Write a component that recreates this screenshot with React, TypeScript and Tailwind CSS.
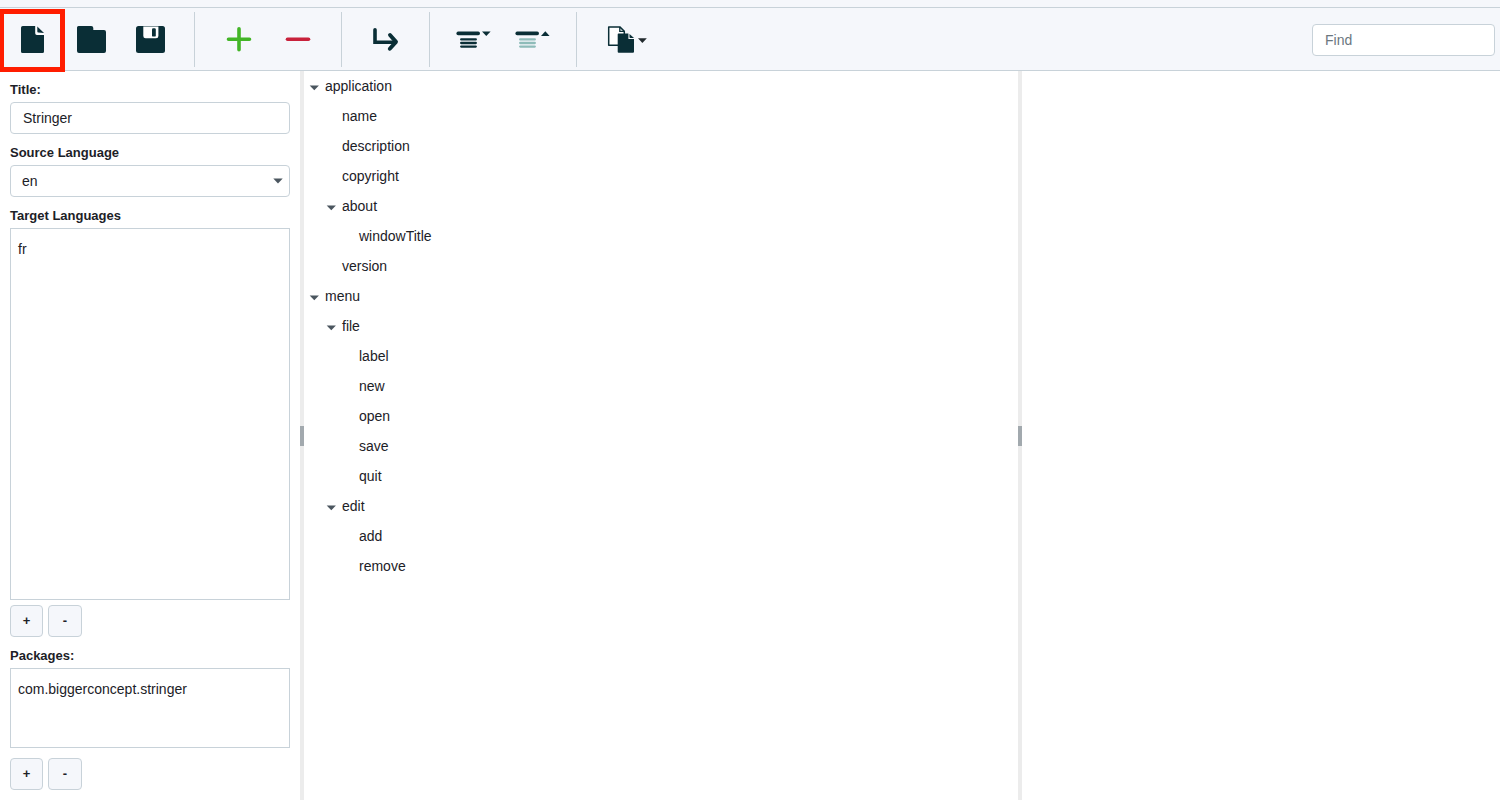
import { useState } from "react";
import type { ReactNode } from "react";

const INK = "#0a2e36";

function ToolButton({ label, highlighted, children }: { label: string; highlighted?: boolean; children: ReactNode }) {
  return (
    <button type="button" aria-label={label} className="relative flex w-[59px] shrink-0">
      <svg width="59" height="55" viewBox="0 0 59 55" fill={INK} aria-hidden="true">
        {children}
      </svg>
      {highlighted && <span className="absolute -top-[3px] -left-1 h-[63px] w-[66px] border-5 border-[#ff1d00]" />}
    </button>
  );
}

function Separator() {
  return <div className="mx-3.5 w-px shrink-0 bg-[#c8d2d9]" />;
}

function Toolbar() {
  return (
    <header className="relative z-10 border-b border-[#c8d2d9] bg-[#f5f7fb]">
      <div className="h-2 border-b border-[#c8d2d9]" />
      <div className="flex pt-1 pr-[5px] pb-[3px] pl-[3px]">
        <ToolButton label="New" highlighted>
          <path d="M32.8 14V20.6Q32.8 22.2 34.4 22.2H41" fill="none" stroke="#fff" strokeWidth="1.6" />
          <path d="M19.8 14H32.2V21.3Q32.2 22.9 33.8 22.9H41V39.5Q41 41 39.5 41H19.5Q18 41 18 39.5V15.8Q18 14 19.8 14Z" />
          <path d="M34.3 14.6L41 20.9L35.4 20.6Q34.3 20.5 34.3 19.5Z" />
        </ToolButton>
        <ToolButton label="Open">
          <path d="M16.5 14H29.2Q31.3 14 31.3 16V18H42Q44 18 44 20V39Q44 41 42 41H17Q15 41 15 39V15.5Q15 14 16.5 14Z" />
        </ToolButton>
        <ToolButton label="Save">
          <rect x="15" y="14" width="29" height="27" rx="2.5" />
          <path d="M22.3 14.4H37.4V24Q37.4 26.3 35.1 26.3H24.6Q22.3 26.3 22.3 24Z" fill="#fff" />
          <rect x="31" y="16.2" width="3.8" height="8.4" rx="1.2" />
        </ToolButton>
        <Separator />
        <ToolButton label="Add">
          <path d="M30 16.7V37.7M19.5 27.3H40.5" stroke="#43b527" strokeWidth="3.6" strokeLinecap="round" />
        </ToolButton>
        <ToolButton label="Remove">
          <path d="M19.5 27.3H40.5" stroke="#c8213b" strokeWidth="3.6" strokeLinecap="round" />
        </ToolButton>
        <Separator />
        <ToolButton label="Move">
          <path d="M19 17.8V30.2H39" fill="none" stroke={INK} strokeWidth="3.6" strokeLinecap="round" />
          <path d="M34 23L40 29.9L33.8 36.8" fill="none" stroke={INK} strokeWidth="3.9" strokeLinecap="round" strokeLinejoin="round" />
        </ToolButton>
        <Separator />
        <ToolButton label="Expand all">
          <path d="M14.2 21.4H34.2" stroke={INK} strokeWidth="3.6" strokeLinecap="round" />
          <path d="M17.2 27.4H31.8M17.2 31H31.8M17.2 34.6H31.8" stroke={INK} strokeWidth="2.3" strokeLinecap="round" />
          <path d="M38 19.5H46.6L42.3 24Z" />
        </ToolButton>
        <ToolButton label="Collapse all">
          <path d="M14.2 21.4H34.2" stroke={INK} strokeWidth="3.6" strokeLinecap="round" />
          <path d="M17.2 27.4H31.8M17.2 31H31.8M17.2 34.6H31.8" stroke="#8ebcb9" strokeWidth="2.3" strokeLinecap="round" />
          <path d="M38 24H46.6L42.3 19.2Z" />
        </ToolButton>
        <Separator />
        <ToolButton label="Copy">
          <path d="M17.7 14.9H28.8L33.3 19.3V33.2H17.7Z" fill="#fff" stroke={INK} strokeWidth="1.5" strokeLinejoin="round" />
          <path d="M28.8 14.9V19.4H33.3" fill="none" stroke={INK} strokeWidth="1.3" />
          <path d="M27.5 21.6H37.4V27H43V39.7Q43 40.8 42 40.8H27.7Q26.7 40.8 26.7 39.8V22.4Q26.7 21.6 27.5 21.6Z" />
          <path d="M38.5 22L43 26.1H39.3Q38.5 26.1 38.5 25.3Z" />
          <path d="M47 26.3H55.8L51.4 31Z" fill="#222a2e" />
        </ToolButton>
        <input
          type="search"
          aria-label="Find"
          placeholder="Find"
          className="ml-auto h-8 w-[183px] self-center rounded-[4px] border border-[#c8d2d9] bg-white px-3 text-sm placeholder:text-[#6b7780]"
        />
      </div>
    </header>
  );
}

function FieldLabel({ htmlFor, id, children }: { htmlFor?: string; id?: string; children: ReactNode }) {
  return (
    <label htmlFor={htmlFor} id={id} className="block shrink-0 pt-[9px] pb-0.5 text-[13px] leading-5 font-bold">
      {children}
    </label>
  );
}

function ListButtons({ subject }: { subject: string }) {
  const style = "h-8 rounded-[4px] border border-[#c8d2d9] bg-[#f5f7fb] text-[13px] font-bold";
  return (
    <div className="flex shrink-0 gap-[5px]">
      <button type="button" aria-label={`Add ${subject}`} className={`${style} w-[33px]`}>+</button>
      <button type="button" aria-label={`Remove ${subject}`} className={`${style} w-[34px]`}>-</button>
    </div>
  );
}

function Sidebar() {
  return (
    <aside className="flex w-[300px] shrink-0 flex-col px-2.5 pb-2.5">
      <FieldLabel htmlFor="title">Title:</FieldLabel>
      <input id="title" defaultValue="Stringer" className="h-8 shrink-0 rounded-[4px] border border-[#c8d2d9] bg-white px-3" />
      <FieldLabel htmlFor="source">Source Language</FieldLabel>
      <div className="relative flex shrink-0">
        <select id="source" defaultValue="en" className="h-8 w-full appearance-none rounded-[4px] border border-[#c8d2d9] bg-white px-[11px]">
          <option>en</option>
          <option>fr</option>
        </select>
        <svg className="pointer-events-none absolute top-[13px] right-[7px]" width="10" height="6" viewBox="0 0 10 6" fill="#4b565f" aria-hidden="true">
          <path d="M0.3 0.4H9.7L5 5.6Z" />
        </svg>
      </div>
      <FieldLabel id="targets">Target Languages</FieldLabel>
      <ul role="listbox" aria-labelledby="targets" className="mb-[5px] flex-1 border border-[#c8d2d9] px-[7px] py-[5px] leading-[30px]">
        <li role="option" aria-selected="false">fr</li>
      </ul>
      <ListButtons subject="language" />
      <FieldLabel id="packages">Packages:</FieldLabel>
      <ul role="listbox" aria-labelledby="packages" className="mb-2.5 h-20 shrink-0 border border-[#c8d2d9] px-[7px] py-[5px] leading-[30px]">
        <li role="option" aria-selected="false">com.biggerconcept.stringer</li>
      </ul>
      <ListButtons subject="package" />
    </aside>
  );
}

type Node = { name: string; children?: Node[] };

const tree: Node[] = [
  {
    name: "application",
    children: [
      { name: "name" },
      { name: "description" },
      { name: "copyright" },
      { name: "about", children: [{ name: "windowTitle" }] },
      { name: "version" },
    ],
  },
  {
    name: "menu",
    children: [
      { name: "file", children: [{ name: "label" }, { name: "new" }, { name: "open" }, { name: "save" }, { name: "quit" }] },
      { name: "edit", children: [{ name: "add" }, { name: "remove" }] },
    ],
  },
];

function TreeItem({ node }: { node: Node }) {
  const [open, setOpen] = useState(true);
  return (
    <li role="treeitem" aria-expanded={node.children ? open : undefined}>
      <div className="flex h-[30px] items-center">
        {node.children ? (
          <button type="button" aria-label={`Toggle ${node.name}`} onClick={() => setOpen(!open)} className="flex w-[17px] justify-start pt-1 pl-px">
            <svg className={open ? "" : "-rotate-90"} width="10" height="6" viewBox="0 0 10 6" fill="#4b565f" aria-hidden="true">
              <path d="M0.7 0.5H9.9L5.3 5.3Z" />
            </svg>
          </button>
        ) : (
          <span className="w-[17px]" />
        )}
        <span>{node.name}</span>
      </div>
      {node.children && open && (
        <ul role="group" className="pl-[17px]">
          {node.children.map((child) => (
            <TreeItem key={child.name} node={child} />
          ))}
        </ul>
      )}
    </li>
  );
}

function Divider() {
  return (
    <div role="separator" aria-orientation="vertical" className="flex w-1 shrink-0 cursor-col-resize items-center bg-[#ececec]">
      <div className="h-5 w-1 bg-[#a2a9ae]" />
    </div>
  );
}

export default function App() {
  return (
    <div className="flex min-h-screen flex-col overflow-hidden bg-white font-['Liberation_Sans',Arial,sans-serif] text-sm text-[#1c2127]">
      <Toolbar />
      <div className="flex flex-1">
        <Sidebar />
        <Divider />
        <main className="min-w-0 flex-1 pl-1">
          <ul role="tree" aria-label="Strings">
            {tree.map((node) => (
              <TreeItem key={node.name} node={node} />
            ))}
          </ul>
        </main>
        <Divider />
        <section aria-label="Details" className="w-[478px]" />
      </div>
    </div>
  );
}
